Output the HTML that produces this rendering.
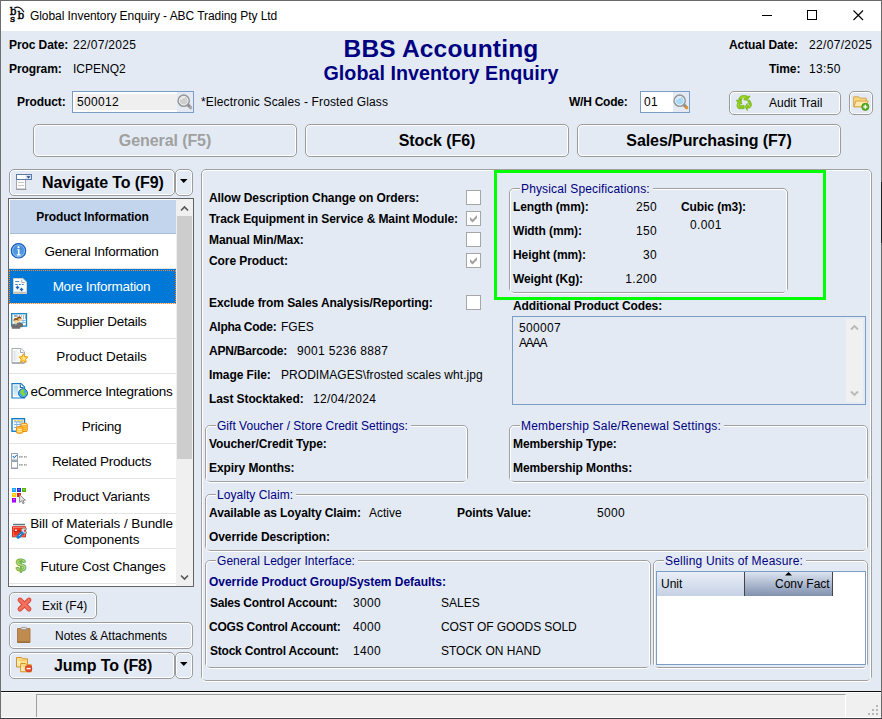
<!DOCTYPE html>
<html><head><meta charset="utf-8"><title>Global Inventory Enquiry - ABC Trading Pty Ltd</title>
<style>
*{box-sizing:border-box;margin:0;padding:0}
html,body{width:882px;height:719px;overflow:hidden;background:#e3eaf4}
body{font-family:"Liberation Sans",Arial,sans-serif;font-size:12px;color:#000;position:relative}
.a{position:absolute;white-space:nowrap;line-height:14px}
.b{font-weight:bold;letter-spacing:-.09px}
.r{letter-spacing:.15px}
.nv{color:#000080}
.n{letter-spacing:.33px}
.btn{position:absolute;border:1px solid #9c9c9c;border-radius:5px;background:#e3eaf4;box-shadow:inset 0 0 0 1px #fff}
.grp{position:absolute;border:1px solid #a0a0a0;border-radius:5px}
.grp:before{content:'';position:absolute;left:0;right:0;top:0;bottom:-2px;border:1px solid #fff;border-radius:4px}
.grp>span{position:absolute;top:-7px;left:10px;background:#e3eaf4;padding:0 3px 0 1px;color:#000080;line-height:14px;white-space:nowrap;letter-spacing:.05px}
.cb{position:absolute;width:15px;height:15px;border:1px solid #a6a6a6;background:#fff}
.it{position:absolute;left:0;width:167px;height:35px;border-bottom:1px solid #e4e4e4;background:#fff;font-size:13.5px;letter-spacing:-.27px;text-align:center;line-height:36px;white-space:nowrap}
.it i{position:absolute;left:0;top:0;font-style:normal}
svg{position:absolute;overflow:visible}
</style></head><body>
<div class="a" style="left:0;top:0;width:882px;height:31px;background:#fff"></div>
<div class="a" style="left:0;top:0;width:882px;height:1px;background:#6a6a6a"></div>
<div class="a" style="left:0;top:0;width:1px;height:719px;background:#6f6f6f"></div>
<div class="a" style="left:881px;top:0;width:1px;height:719px;background:#6a6a6a"></div>
<div class="a" style="left:881px;top:182px;width:1px;height:61px;background:#222"></div>
<div class="a" id="title" style="left:30px;top:8px;font-size:12px;line-height:16px;letter-spacing:-.065px">Global Inventory Enquiry - ABC Trading Pty Ltd</div>
<svg style="left:8px;top:6px" width="18" height="18" viewBox="0 0 18 18"><g font-family="DejaVu Serif,Liberation Serif,serif" fill="#000" stroke="#000" stroke-width=".45"><text x="1.700" y="8.800" font-size="10.500">b</text><text x="2" y="16" font-size="10">s</text><text x="9.600" y="12.900" font-size="10.500">b</text></g><path d="M6.300 2.200Q11.500 -1.200 16 6.200" fill="none" stroke="#111" stroke-width="1.250"/></svg>
<svg style="left:755px;top:5px" width="120" height="22" viewBox="0 0 120 22"><path d="M7 10.500h10" stroke="#000" stroke-width="1"/><rect x="52.500" y="5.500" width="9" height="9" fill="none" stroke="#000"/><path d="M98.500 5.500l9.500 9.500M108 5.500l-9.500 9.500" stroke="#000" stroke-width="1.100"/></svg>
<div class="a b" style="left:9px;top:38px">Proc Date:</div><div class="a n" style="left:73px;top:38px">22/07/2025</div>
<div class="a b" style="left:9px;top:62px">Program:</div><div class="a" style="left:73px;top:62px">ICPENQ2</div>
<div class="a b nv" id="h1" style="left:0;width:882px;text-align:center;top:35px;font-size:24.5px;line-height:28px;letter-spacing:.18px">BBS Accounting</div>
<div class="a b nv" id="h2" style="left:0;width:882px;text-align:center;top:62px;font-size:19.7px;line-height:22px;letter-spacing:.04px">Global Inventory Enquiry</div>
<div class="a b" style="left:729px;top:38px">Actual Date:</div><div class="a n" style="left:809px;top:38px">22/07/2025</div>
<div class="a b" style="left:769px;top:62px">Time:</div><div class="a n" style="left:809px;top:62px">13:50</div>
<div class="a b" style="left:17px;top:95px">Product:</div>
<div class="a" style="left:72px;top:91px;width:122px;height:22px;border:1px solid #7b9cc5;background:#fff"></div>
<div class="a" style="left:75px;top:94px;width:102px;height:16px;background:#efefef"></div>
<div class="a" style="left:177px;top:92px;width:16px;height:20px;background:#e3eaf4"></div>
<div class="a n" style="left:77px;top:95px">500012</div>
<svg style="left:177px;top:94px" width="16" height="16" viewBox="0 0 16 16"><path d="M12.300 12.300L13.700 13.700" stroke="#a8a8a8" stroke-width="3.300" stroke-linecap="round"/><path d="M10.300 10.300L12.600 12.600" stroke="#8d8d8d" stroke-width="2.800"/><circle cx="6.700" cy="6.700" r="5.500" fill="#cfcfcf" stroke="#999" stroke-width="1.700"/><circle cx="6.700" cy="6.700" r="4.300" fill="none" stroke="#f2f2f2" stroke-width="1"/><path d="M3.900 5.600A3.200 3.200 0 0 1 7.600 3.600" stroke="#fff" stroke-opacity=".75" fill="none" stroke-width="1.200"/></svg>
<div class="a r" style="left:201px;top:95px">*Electronic Scales - Frosted Glass</div>
<div class="a b" style="left:569px;top:95px;letter-spacing:-.25px">W/H Code:</div>
<div class="a" style="left:640px;top:91px;width:50px;height:22px;border:1px solid #7b9cc5;background:#fff"></div>
<div class="a" style="left:673px;top:92px;width:16px;height:20px;background:#e3eaf4"></div>
<div class="a n" style="left:644px;top:95px">01</div>
<svg style="left:673px;top:94px" width="16" height="16" viewBox="0 0 16 16"><path d="M12.300 12.300L13.700 13.700" stroke="#e0922e" stroke-width="3.300" stroke-linecap="round"/><path d="M10.300 10.300L12.600 12.600" stroke="#8d8d8d" stroke-width="2.800"/><circle cx="6.700" cy="6.700" r="5.500" fill="#a9d9f6" stroke="#999" stroke-width="1.700"/><circle cx="6.700" cy="6.700" r="4.300" fill="none" stroke="#f2f2f2" stroke-width="1"/><path d="M3.900 5.600A3.200 3.200 0 0 1 7.600 3.600" stroke="#fff" stroke-opacity=".75" fill="none" stroke-width="1.200"/></svg>
<div class="btn" style="left:729px;top:91px;width:112px;height:24px"></div>
<svg style="left:736px;top:95px" width="16" height="16" viewBox="0 0 16 16"><g fill="#8fcb14" stroke="#5aa30c" stroke-width=".5" stroke-linejoin="round"><path d="M2.600 4.200Q3.600 1.200 6 .5h4.200l.9.900 3-.4-2.900 4.400-3.600-.6 1.200-1.300-1.300-.7H6.300L5.400 5.200z"/><path d="M.2 5.200l4.800-.5.900 4.400-1.400-.9-.9 2.200h4.600v3.300H2.600Q.6 12.500.9 10l.8-2.400z"/><path d="M11.600 5.500l2.300-.3 1.600 3.800q.2 2.600-1.700 4h-2.500v2.600L9.100 12l2.200-3.700v2.400h1.300l.6-1.500z"/></g><path d="M4.500 2.300l4.500-.3M2.300 8.500l-.2 3M12.800 12l1.200-2" stroke="#b4e23a" stroke-width=".9" fill="none"/></svg>
<div class="a" style="left:769px;top:96px">Audit Trail</div>
<div class="btn" style="left:849px;top:91px;width:24px;height:24px"></div>
<svg style="left:853px;top:95px" width="16" height="16" viewBox="0 0 16 16"><path d="M.7 1.800h5l1.200 1.400h6.300v8.500H.7z" fill="#f7d77c" stroke="#d9a24a" stroke-width="1"/><path d="M2.900 6h12.300l-2 5.800H.9z" fill="#fdeaa8" stroke="#d9a24a" stroke-width="1" stroke-linejoin="round"/><circle cx="12.300" cy="11.800" r="3.600" fill="#5bb320" stroke="#3f8f12" stroke-width=".8"/><path d="M10.300 11.800h4M12.300 9.800v4" stroke="#fff" stroke-width="1.300"/></svg>
<div class="btn" style="left:33px;top:124px;width:264px;height:33px"></div>
<div class="a b" style="left:33px;width:264px;text-align:center;top:132px;font-size:16px;line-height:18px;color:#a0a0a0">General (F5)</div>
<div class="btn" style="left:305px;top:124px;width:264px;height:33px"></div>
<div class="a b" style="left:305px;width:264px;text-align:center;top:132px;font-size:16px;line-height:18px;color:#000">Stock (F6)</div>
<div class="btn" style="left:577px;top:124px;width:264px;height:33px"></div>
<div class="a b" style="left:577px;width:264px;text-align:center;top:132px;font-size:16px;line-height:18px;color:#000">Sales/Purchasing (F7)</div>
<div class="btn" style="left:9px;top:169px;width:166px;height:27px"></div>
<svg style="left:16px;top:174px" width="16" height="16" viewBox="0 0 16 16"><rect x=".5" y="5.500" width="9" height="9.500" fill="#fff" stroke="#a9a9a9"/><path d="M0 15.500h10.500" stroke="#9a9a9a"/><path d="M2 8.500h6M2 11.500h6" stroke="#c9c9c9"/><rect x=".5" y=".5" width="15" height="5" fill="#fff" stroke="#5b7aa6"/><rect x="9.500" y="1" width="5.500" height="4" fill="#d7e3f4"/><path d="M10.500 2.200h4l-2 2.200z" fill="#23416e"/></svg>
<div class="a b" style="left:42px;top:174px;font-size:16px;line-height:18px">Navigate To (F9)</div>
<div class="btn" style="left:175px;top:169px;width:18px;height:27px"></div>
<svg style="left:180px;top:179px" width="8" height="4" viewBox="0 0 8 4"><path d="M0 0h7.500L3.750 4z" fill="#000"/></svg>
<div class="a" id="list" style="left:8px;top:198px;width:186px;height:389px;border:1px solid #646464;background:#fff;overflow:hidden">
<div class="it b" style="top:1px;height:34px;background:#c3d5ec;font-size:12px;letter-spacing:-.12px;border-bottom:1px solid #a9bedb;line-height:34px">Product Information</div>
<div class="it" style="top:35px;padding-left:18px;">General Information</div>
<div class="it" style="top:70px;padding-left:18px;background:#0078d7;color:#fff;background-clip:padding-box;">More Information</div>
<div class="it" style="top:105px;padding-left:18px;">Supplier Details</div>
<div class="it" style="top:140px;padding-left:18px;letter-spacing:-0.07px;">Product Details</div>
<div class="it" style="top:175px;padding-left:18px;">eCommerce Integrations</div>
<div class="it" style="top:210px;padding-left:18px;">Pricing</div>
<div class="it" style="top:245px;padding-left:18px;">Related Products</div>
<div class="it" style="top:280px;padding-left:18px;letter-spacing:-0.14px;">Product Variants</div>
<div class="it" style="top:315px;padding-left:18px;line-height:16px;padding-top:2px;letter-spacing:-.08px;">Bill of Materials / Bundle<br>Components</div>
<div class="it" style="top:350px;padding-left:18px;letter-spacing:-0.17px;padding-left:21px;">Future Cost Changes</div>
<div class="a" style="left:0;top:71px;width:167px;height:34px;border:1px dotted #ff8728"></div>
<div class="a" style="left:0;top:1px;width:1px;height:34px;background:#fff"></div>
<div class="a" style="left:167px;top:0;width:17px;height:387px;background:#f0f0f0"></div>
<div class="a" style="left:168px;top:17px;width:15px;height:243px;background:#cdcdcd"></div>
<svg style="left:167px;top:0" width="17" height="387" viewBox="0 0 17 387"><path d="M5 11.500l3.500-3.500 3.500 3.500M5 376.500l3.500 3.500 3.500-3.500" fill="none" stroke="#555" stroke-width="1.600"/></svg>
</div>
<svg style="left:10px;top:243px" width="16" height="16" viewBox="0 0 16 16"><defs><linearGradient id="gi" x1="0" y1="0" x2="0" y2="1"><stop offset="0" stop-color="#3d86d2"/><stop offset="1" stop-color="#5aa4e6"/></linearGradient></defs><circle cx="8.500" cy="7.800" r="7.200" fill="url(#gi)" stroke="#1459bd" stroke-width="1.100"/><circle cx="8.500" cy="7.800" r="6" fill="none" stroke="#9cc6ee" stroke-width=".8"/><circle cx="8.500" cy="4.200" r="1.100" fill="#fff"/><path d="M7.200 6.300h2.300v5h1.200v1.100H6.800v-1.100h1.200V7.300H7.200z" fill="#fff"/></svg>
<svg style="left:13px;top:278px" width="14" height="16" viewBox="0 0 14 16"><path d="M.5.500h9.300l3.700 3.400v11.600H.5z" fill="#fff" stroke="#d9d0c3"/><path d="M.5 14.500h13" stroke="#c8bfb3" stroke-width="1.600"/><path d="M8.800 1.500v3h3" fill="none" stroke="#a7a7a7" stroke-width="1"/><path d="M2.200 3.500h4M2.200 6.500h2.500M5.800 6.500h2M8.800 6.500h2" stroke="#4a82c2" stroke-width="1.200"/><path d="M4.500 7.800v3.400M2.800 9.500h3.400M8.500 9.800v3.400M6.800 11.500h3.400" stroke="#1d66b7" stroke-width="1.300"/></svg>
<svg style="left:11px;top:313px" width="17" height="16" viewBox="0 0 17 16"><rect x=".7" y=".7" width="14.800" height="12.400" fill="#f2fbff" stroke="#1786c6" stroke-width="1.300"/><path d="M3 3h3.500M8 3h.8M10 3h.8M12 3h.8M14 3h.8M12 5h.8M14 5h.8" stroke="#555" stroke-width="1"/><path d="M10.500 7.500h4M10.500 9.500h4M12 6.500v4" stroke="#7db9e8" stroke-width="1"/><circle cx="8.300" cy="6.200" r="2.200" fill="#f0c98a"/><path d="M6 6.200Q6 3.200 8.400 3.400 10.800 3.600 10.500 6.200 9.500 4.500 6 6.200z" fill="#8a4a12"/><path d="M5.500 14.800V11q0-1.800 2.800-1.800T12 11v3z" fill="#6b6b6b"/><circle cx="5" cy="8" r="2.400" fill="#f3d193"/><path d="M2.500 8Q2.300 4.800 5 5 7.800 5.200 7.500 8 6 6.200 2.500 8z" fill="#9a5516"/><path d="M.8 15.800v-3.500Q.8 10.500 5 10.500t4.200 1.800v3.500z" fill="#6f6f6f"/><path d="M4.300 10.600h1.400L5 14z" fill="#fff"/><path d="M4.800 11h.5v3h-.5z" fill="#223"/></svg>
<svg style="left:11px;top:348px" width="17" height="16" viewBox="0 0 17 16"><defs><linearGradient id="gp" x1="0" y1="0" x2="1" y2="0"><stop offset="0" stop-color="#dfe3e6"/><stop offset="1" stop-color="#fff"/></linearGradient></defs><path d="M1 .5h9l3.500 3.300V15H1z" fill="#fff" stroke="#a9aeb1"/><path d="M1 15h12.500" stroke="#9b9fa2" stroke-width="1.400"/><rect x="2.500" y="2.500" width="6" height="10.500" fill="url(#gp)"/><path d="M9.500 1.500v3h3" fill="none" stroke="#a3a7aa"/><path d="M12.400 5.700l1.400 2.900 3.100.4-2.300 2.200.6 3.200-2.800-1.500-2.800 1.500.6-3.200L7.900 9l3.100-.4z" fill="#ffd24a" stroke="#f39a12" stroke-width="1" stroke-linejoin="round"/><path d="M12.400 7.800l.7 1.600 1.600.2-1.200 1.100.3 1.600-1.400-.8z" fill="#fff3b8"/></svg>
<svg style="left:11px;top:383px" width="17" height="16" viewBox="0 0 17 16"><defs><linearGradient id="ge" x1="0" y1="0" x2="0" y2="1"><stop offset="0" stop-color="#a9d3ea"/><stop offset="1" stop-color="#e6f3fa"/></linearGradient></defs><path d="M1 .6h9l3.500 3.300V15H1z" fill="#fff" stroke="#1a7cc2" stroke-width="1.200"/><rect x="2.600" y="2.500" width="4.600" height="10.500" fill="url(#ge)"/><path d="M9.300 1.500v3h3.200" fill="none" stroke="#1a6fb4" stroke-width="1.200"/><circle cx="12" cy="10.200" r="4.500" fill="#46a8f0" stroke="#1668bd" stroke-width="1"/><path d="M10 7.200q2-1.400 3.600-.6l-.2 1.500-1.300.6.500 1.300 1.600.6-.4 2-1.500.8-.8-1.600-1.500-.9-.6-1.600z" fill="#8fdc10"/><path d="M15 8.500l.8 1.200-.4 1.600-.8-.8z" fill="#8fdc10"/></svg>
<svg style="left:11px;top:418px" width="17" height="16" viewBox="0 0 17 16"><rect x="1" y=".7" width="12.500" height="12.500" fill="#fff" stroke="#0f7bc3" stroke-width="1.400"/><path d="M3 2.800h2.300M6.300 2.800h2.300M9.600 2.800h2.300" stroke="#f7b511" stroke-width="1.200"/><path d="M3 3.900h9M3 6.500h9M3 9.500h6M5.800 3.500v8M9 3.500v6" stroke="#7cb4e6" stroke-width="1"/><rect x="10" y="5.300" width="6.300" height="8.200" rx="1.200" fill="#ffc93a" stroke="#ef8c1c" stroke-width="1"/><path d="M11 7.500h4.300M11 9.500h4.300M11 11.500h4.300" stroke="#f8a12a" stroke-width=".9"/><path d="M11 6.600h4.300" stroke="#fff1a8" stroke-width=".9"/><rect x="5.500" y="8.600" width="6.300" height="6.600" rx="1.200" fill="#ffcf45" stroke="#ef8c1c" stroke-width="1"/><path d="M6.600 11.500h4.200M6.600 13.300h4.200" stroke="#fff1a8" stroke-width=".9"/><path d="M6.600 10h4.200" stroke="#f8a12a" stroke-width=".9"/></svg>
<svg style="left:10px;top:453px" width="18" height="16" viewBox="0 0 18 16"><rect x="1.500" y=".5" width="6" height="6.500" fill="#fff" stroke="#93a4bd"/><rect x="1.500" y="8.500" width="6" height="6.500" fill="#fff" stroke="#93a4bd"/><path d="M1 7.750h7M1 15.500h7" stroke="#9a9a9a" stroke-width="1"/><path d="M2.800 3.300l1.300 1.400 2.600-2.400" fill="none" stroke="#1b68c0" stroke-width="1.300" stroke-dasharray="1.100 .5"/><path d="M9 3.800h3.800M14 3.800h2.800M9 11.800h3.800M14 11.800h2.800" stroke="#858585" stroke-width="1.300" stroke-dasharray="1.600 .5"/></svg>
<svg style="left:10px;top:488px" width="17" height="17" viewBox="0 0 17 17"><rect x="2" y="0" width="4" height="4" fill="#1ba4f8"/><rect x="7" y="0" width="4" height="4" fill="#2030d8"/><rect x="12" y="0" width="4" height="4" fill="#55b800"/><rect x="2" y="5" width="4" height="4" fill="#ffcc00"/><rect x="7" y="5" width="4" height="4" fill="#e82000"/><rect x="2" y="10" width="4" height="4.500" fill="#a800f0"/><path d="M3.200 1.700h1.600M8.200 1.700h1.600M13.200 1.700h1.600M3.200 6.700h1.600M3.200 11.700h1.600" stroke="#fff" stroke-opacity=".55" stroke-width="1"/><path d="M9.600 6.500v8l2-1.700 1.300 2.900 1.300-.6-1.300-2.800h2.500z" fill="#e6e6e6" stroke="#8a8a8a" stroke-width="1" stroke-linejoin="round"/></svg>
<svg style="left:10px;top:523px" width="18" height="16" viewBox="0 0 18 16"><path d="M3 1.500h12" stroke="#5f7476" stroke-width="1.400"/><path d="M3.500 2.200h11v1.500h-11z" fill="#c8dadb"/><rect x="2" y="3.200" width="14" height="11" rx=".8" fill="#e01808"/><rect x="3.200" y="4.500" width="11.600" height="8.500" fill="#f0341c" stroke="#f59c8c" stroke-width=".7"/><path d="M3.500 8h11" stroke="#c01000" stroke-width="1"/><rect x="5" y="6.400" width="1.800" height="1.600" fill="#dff"/><path d="M2 14.400h14" stroke="#b8c8c8" stroke-width=".8"/><path d="M16.500 5.200h-3.300q-1.800.3-1.800 2.600 0 2 1.800 2.500h3.300V8.800h-2.200V6.800h2.200z" fill="#e4e4e4" stroke="#8d8d8d" stroke-width=".8"/><circle cx="15" cy="7.800" r=".8" fill="#e8402c"/><path d="M11.800 10.200L8.200 13.900" stroke="#0f7fd6" stroke-width="3.600" stroke-linecap="round"/><path d="M11.200 10.800L8.600 13.500" stroke="#fff" stroke-width="1" stroke-dasharray="1 .8"/></svg>
<svg style="left:10px;top:557px" width="18" height="18" viewBox="0 0 18 18"><text transform="translate(5.700 14.300) scale(1.130 1)" font-family="Liberation Sans,Arial,sans-serif" font-weight="bold" font-size="16.200" fill="#b4e288" stroke="#76b046" stroke-width=".9">$</text></svg>
<div class="btn" style="left:9px;top:592px;width:88px;height:27px"></div>
<svg style="left:17px;top:597px" width="15" height="15" viewBox="0 0 15 15"><path d="M3 3l9 9M12 3l-9 9" stroke="#dc4533" stroke-width="4.800" stroke-linecap="round"/><path d="M3 3l9 9M12 3l-9 9" stroke="#f2705e" stroke-width="3" stroke-linecap="round"/></svg>
<div class="a" style="left:42px;top:599px">Exit (F4)</div>
<div class="btn" style="left:9px;top:622px;width:184px;height:27px"></div>
<svg style="left:17px;top:627px" width="14" height="16" viewBox="0 0 14 16"><rect x=".5" y="1.500" width="12.500" height="14" rx=".3" fill="#bf8b4f" stroke="#ad7a40"/><path d="M.5 15h12.500" stroke="#8f6230" stroke-width="1"/><rect x="4" y=".4" width="5.500" height="2.200" rx=".8" fill="#e3e3e3" stroke="#8c8c8c" stroke-width=".8"/></svg>
<div class="a" style="left:55px;top:629px">Notes &amp; Attachments</div>
<div class="btn" style="left:9px;top:652px;width:166px;height:27px"></div>
<svg style="left:16px;top:657px" width="17" height="16" viewBox="0 0 17 16"><g fill="#fbe08c" stroke="#d8922c" stroke-width="1" stroke-linejoin="round"><path d="M.5.500h5.300l1 1.300h4.700v8.200H.5z"/><path d="M4.700 6.500h4.800l1 1.300h5v7H4.700z"/></g><path d="M1.800 2.500v6.500M3.500 3.500v5M6 8.500v5.500M8 9.500v4.500" stroke="#fff6c8" stroke-width="1"/><path d="M2.500 3h8M6.500 9h8.500" stroke="#f4c04e" stroke-width="1"/><circle cx="12.600" cy="11.600" r="3.300" fill="#ea4a34" stroke="#c8321f" stroke-width=".7"/><path d="M10.600 11.600h4" stroke="#fff" stroke-width="1.400"/></svg>
<div class="a b" style="left:54px;top:657px;font-size:16px;line-height:18px">Jump To (F8)</div>
<div class="btn" style="left:175px;top:652px;width:18px;height:27px"></div>
<svg style="left:180px;top:662px" width="8" height="4" viewBox="0 0 8 4"><path d="M0 0h7.500L3.750 4z" fill="#000"/></svg>
<div class="grp" style="left:201px;top:169px;width:671px;height:512px"></div>
<div class="a b" style="left:209px;top:191px">Allow Description Change on Orders:</div>
<div class="a b" style="left:209px;top:212px">Track Equipment in Service &amp; Maint Module:</div>
<div class="a b" style="left:209px;top:233px">Manual Min/Max:</div>
<div class="a b" style="left:209px;top:254px">Core Product:</div>
<div class="a b" style="left:209px;top:296px">Exclude from Sales Analysis/Reporting:</div>
<div class="cb" style="left:466px;top:190px"></div>
<div class="cb" style="left:466px;top:211px"></div>
<svg style="left:466px;top:211px" width="15" height="15" viewBox="0 0 15 15"><path d="M4 6L6.500 8.500 11 4V7L6.500 11.500 4 9z" fill="#a2a2a2"/></svg>
<div class="cb" style="left:466px;top:232px"></div>
<div class="cb" style="left:466px;top:253px"></div>
<svg style="left:466px;top:253px" width="15" height="15" viewBox="0 0 15 15"><path d="M4 6L6.500 8.500 11 4V7L6.500 11.500 4 9z" fill="#a2a2a2"/></svg>
<div class="cb" style="left:466px;top:295px"></div>
<div class="a b" style="left:209px;top:320px;letter-spacing:-.3px">Alpha Code:</div><div class="a" style="left:281px;top:320px">FGES</div>
<div class="a b" style="left:209px;top:344px;letter-spacing:-.22px">APN/Barcode:</div><div class="a n" style="left:297px;top:344px">9001 5236 8887</div>
<div class="a b" style="left:209px;top:368px">Image File:</div><div class="a" style="left:281px;top:368px;letter-spacing:.05px">PRODIMAGES\frosted scales wht.jpg</div>
<div class="a b" style="left:209px;top:392px">Last Stocktaked:</div><div class="a n" style="left:313px;top:392px">12/04/2024</div>
<div class="a" style="left:494px;top:170px;width:332px;height:130px;border:3px solid #00ff00"></div>
<div class="grp" style="left:509px;top:188px;width:279px;height:105px"><span style="letter-spacing:.14px">Physical Specifications:</span></div>
<div class="a b" style="left:513px;top:200px">Length (mm):</div><div class="a n" style="left:600px;width:57px;text-align:right;top:200px">250</div>
<div class="a b" style="left:513px;top:224px">Width (mm):</div><div class="a n" style="left:600px;width:57px;text-align:right;top:224px">150</div>
<div class="a b" style="left:513px;top:248px">Height (mm):</div><div class="a n" style="left:600px;width:57px;text-align:right;top:248px">30</div>
<div class="a b" style="left:513px;top:272px">Weight (Kg):</div><div class="a n" style="left:600px;width:57px;text-align:right;top:272px">1.200</div>
<div class="a b" style="left:681px;top:200px">Cubic (m3):</div><div class="a n" style="left:690px;top:218px">0.001</div>
<div class="a b" style="left:513px;top:299px">Additional Product Codes:</div>
<div class="a" style="left:512px;top:316px;width:354px;height:89px;border:1px solid #7b9cc5;background:#e3eaf4"></div>
<div class="a" style="left:519px;top:321px;line-height:15px"><span class="n">500007</span><br><span style="letter-spacing:-1.200px">AAAA</span></div>
<div class="a" style="left:846px;top:319px;width:17px;height:83px;background:#f0f0f0"></div>
<svg style="left:846px;top:319px" width="17" height="83" viewBox="0 0 17 83"><path d="M5 10.500l3.500-3.500 3.500 3.500M5 72.500l3.500 3.500 3.500-3.500" fill="none" stroke="#b9b9b9" stroke-width="1.900"/></svg>
<div class="grp" style="left:205px;top:425px;width:263px;height:57px"><span style="letter-spacing:.02px">Gift Voucher / Store Credit Settings:</span></div>
<div class="a b" style="left:209px;top:437px">Voucher/Credit Type:</div>
<div class="a b" style="left:209px;top:461px">Expiry Months:</div>
<div class="grp" style="left:509px;top:425px;width:359px;height:57px"><span style="letter-spacing:.2px">Membership Sale/Renewal Settings:</span></div>
<div class="a b" style="left:513px;top:437px">Membership Type:</div>
<div class="a b" style="left:513px;top:461px">Membership Months:</div>
<div class="grp" style="left:205px;top:494px;width:663px;height:57px"><span>Loyalty Claim:</span></div>
<div class="a b" style="left:209px;top:506px">Available as Loyalty Claim:</div><div class="a" style="left:369px;top:506px">Active</div>
<div class="a b" style="left:457px;top:506px">Points Value:</div><div class="a n" style="left:597px;top:506px">5000</div>
<div class="a b" style="left:209px;top:530px">Override Description:</div>
<div class="grp" style="left:205px;top:560px;width:446px;height:108px"><span>General Ledger Interface:</span></div>
<div class="a b nv" style="left:209px;top:575px;letter-spacing:-.03px">Override Product Group/System Defaults:</div>
<div class="a b" style="left:210px;top:596px;letter-spacing:-.22px">Sales Control Account:</div><div class="a n" style="left:353px;top:596px">3000</div><div class="a" style="left:441px;top:596px">SALES</div>
<div class="a b" style="left:209px;top:620px;letter-spacing:-.22px">COGS Control Account:</div><div class="a n" style="left:353px;top:620px">4000</div><div class="a" style="left:441px;top:620px;letter-spacing:-.08px">COST OF GOODS SOLD</div>
<div class="a b" style="left:210px;top:644px;letter-spacing:-.22px">Stock Control Account:</div><div class="a n" style="left:353px;top:644px">1400</div><div class="a" style="left:441px;top:644px">STOCK ON HAND</div>
<div class="grp" style="left:653px;top:560px;width:215px;height:108px"><span style="letter-spacing:.19px">Selling Units of Measure:</span></div>
<div class="a" style="left:656px;top:571px;width:210px;height:94px;border:1px solid #7b9cc5;background:#fff"></div>
<div class="a" style="left:657px;top:572px;width:88px;height:24px;background:linear-gradient(#e9eff8,#c5d1e4)"></div>
<div class="a" style="left:744px;top:572px;width:89px;height:24px;background:linear-gradient(#dbe3ef,#8090af);border-left:1px solid #444;border-right:1px solid #444"></div>
<div class="a" style="left:661px;top:577px">Unit</div>
<div class="a" style="left:775px;top:577px">Conv Fact</div>
<svg style="left:785px;top:572px" width="8" height="4" viewBox="0 0 8 4"><path d="M0 3.500L3.500 0 7 3.500z" fill="#000"/></svg>
<div class="a" style="left:1px;top:691px;width:880px;height:1px;background:#111"></div>
<div class="a" style="left:1px;top:692px;width:880px;height:1px;background:#fff"></div>
<div class="a" style="left:1px;top:693px;width:880px;height:24px;background:#f0f0f0"></div>
<div class="a" style="left:36px;top:694px;width:810px;height:23px;border-left:1px solid #a0a0a0;border-top:1px solid #a0a0a0;border-right:1px solid #fff"></div>
<svg style="left:866px;top:703px" width="14" height="14" viewBox="0 0 14 14"><g fill="#b8b8b8"><rect x="10" y="2" width="2" height="2"/><rect x="10" y="6" width="2" height="2"/><rect x="10" y="10" width="2" height="2"/><rect x="6" y="6" width="2" height="2"/><rect x="6" y="10" width="2" height="2"/><rect x="2" y="10" width="2" height="2"/></g></svg>
<div class="a" style="left:1px;top:717px;width:880px;height:1px;background:#fff"></div>
<div class="a" style="left:0;top:718px;width:882px;height:1px;background:#3a3a40"></div>
</body></html>
